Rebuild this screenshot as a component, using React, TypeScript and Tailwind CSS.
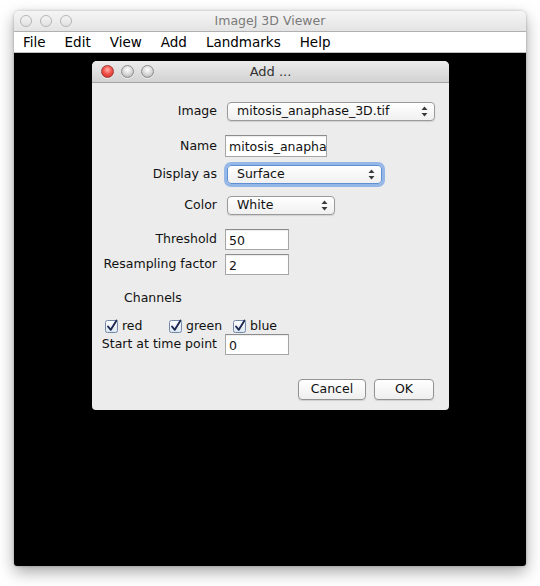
import type { ReactNode } from "react";

const font = "font-['DejaVu_Sans',sans-serif]";

// 맥 스타일 신호등 버튼 (비활성 창)
const InactiveLight = () => (
  <span className="w-[12px] h-[12px] rounded-full border border-[#b5b5b5] bg-gradient-to-b from-[#f4f4f4] to-[#e2e2e2]" />
);

const RedLight = () => (
  <span className="w-[13px] h-[13px] rounded-full border border-[#a23a36] bg-[radial-gradient(circle_at_50%_35%,#ffb3ad_0%,#f2554d_45%,#c5231c_100%)] shadow-[0_1px_0_rgba(255,255,255,0.6)]" />
);

const GrayLight = () => (
  <span className="w-[13px] h-[13px] rounded-full border border-[#8e8e8e] bg-[radial-gradient(circle_at_50%_35%,#ffffff_0%,#d8d8d8_50%,#a9a9a9_100%)] shadow-[0_1px_0_rgba(255,255,255,0.6)]" />
);

const Arrows = () => (
  <svg width="7" height="11" viewBox="0 0 7 11" className="shrink-0">
    <path d="M3.5 0.5 L6.5 4 L0.5 4 Z" fill="#3a3a3a" />
    <path d="M3.5 10.5 L6.5 7 L0.5 7 Z" fill="#3a3a3a" />
  </svg>
);

type PopupProps = { value: string; width: string; focused?: boolean };

const Popup = ({ value, width, focused }: PopupProps) => (
  <div
    className={`${width} h-[19px] ml-[10px] flex items-center justify-between pl-[9px] pr-[6px] rounded-[4px] border bg-gradient-to-b from-white to-[#f0f0f0] ${
      focused
        ? "border-[#5d8fd4] shadow-[0_0_0_3px_rgba(120,166,230,0.75)]"
        : "border-[#9a9a9a] shadow-[0_1px_1px_rgba(0,0,0,0.12)]"
    }`}
  >
    <span className="leading-none">{value}</span>
    <Arrows />
  </div>
);

type FieldProps = { value: string; width: string; height?: string };

const Field = ({ value, width, height = "h-[21px]" }: FieldProps) => (
  <input
    readOnly
    value={value}
    className={`${width} ${height} ml-[8px] pl-[3px] pt-[1px] bg-white border border-[#a6a6a6] border-t-[#8c8c8c] outline-none text-[12.5px] text-[#111] ${font} shadow-[inset_0_1px_1px_rgba(0,0,0,0.08)]`}
  />
);

const Row = ({ label, mt, children }: { label: string; mt: string; children: ReactNode }) => (
  <div className={`flex items-center ${mt}`}>
    <div className="w-[125px] shrink-0 text-right whitespace-nowrap">{label}</div>
    {children}
  </div>
);

const CheckBox = ({ label }: { label: string }) => (
  <div className="w-[64px] flex items-center gap-[4px]">
    <svg width="13" height="14" viewBox="0 0 13 14" className="shrink-0">
      <defs>
        <linearGradient id="cbg" x1="0" y1="0" x2="0" y2="1">
          <stop offset="0" stopColor="#ffffff" />
          <stop offset="1" stopColor="#dde6f1" />
        </linearGradient>
      </defs>
      <rect x="0.5" y="1.5" width="12" height="12" rx="2" fill="url(#cbg)" stroke="#6f88aa" />
      <path d="M3 7.5 L5.8 10.8 L11.5 1.5" fill="none" stroke="#1d2b52" strokeWidth="1.9" strokeLinecap="round" strokeLinejoin="round" />
    </svg>
    <span>{label}</span>
  </div>
);

const Button = ({ label, width }: { label: string; width: string }) => (
  <div
    className={`${width} h-[21px] flex items-center justify-center rounded-[4px] border border-[#939393] bg-gradient-to-b from-white to-[#efefef] shadow-[0_1px_1px_rgba(0,0,0,0.12)]`}
  >
    {label}
  </div>
);

const AddDialog = () => (
  <div
    className={`absolute left-[78px] top-[8px] w-[357px] h-[349px] flex flex-col bg-[#ececec] rounded-t-[5px] rounded-b-[4px] text-[12.5px] text-[#111] ${font}`}
  >
    {/* 다이얼로그 타이틀바 */}
    <div className="relative h-[22px] shrink-0 flex items-center pl-[9px] gap-[7px] rounded-t-[5px] bg-gradient-to-b from-[#ececec] to-[#d2d2d2] border-b border-[#a3a3a3]">
      <RedLight />
      <GrayLight />
      <GrayLight />
      <span className="absolute inset-0 flex items-center justify-center text-[13px] text-[#333]">
        Add ...
      </span>
    </div>

    <Row label="Image" mt="mt-[19px]">
      <Popup value="mitosis_anaphase_3D.tif" width="w-[208px]" />
    </Row>
    <Row label="Name" mt="mt-[14px]">
      <Field value="mitosis_anaphase_3D" width="w-[102px]" height="h-[22px]" />
    </Row>
    <Row label="Display as" mt="mt-[8px]">
      <Popup value="Surface" width="w-[155px]" focused />
    </Row>
    <Row label="Color" mt="mt-[12px]">
      <Popup value="White" width="w-[108px]" />
    </Row>
    <Row label="Threshold" mt="mt-[14px]">
      <Field value="50" width="w-[64px]" />
    </Row>
    <Row label="Resampling factor" mt="mt-[4px]">
      <Field value="2" width="w-[64px]" />
    </Row>

    <div className="mt-[15px] h-[16px] pl-[32px] flex items-center">Channels</div>

    <div className="mt-[12px] h-[16px] pl-[13px] flex items-center">
      <CheckBox label="red" />
      <CheckBox label="green" />
      <CheckBox label="blue" />
    </div>

    <Row label="Start at time point" mt="mt-0">
      <Field value="0" width="w-[64px]" />
    </Row>

    <div className="mt-[24px] flex justify-end gap-[8px] pr-[15px]">
      <Button label="Cancel" width="w-[68px]" />
      <Button label="OK" width="w-[60px]" />
    </div>
  </div>
);

export default function App() {
  const menus = ["File", "Edit", "View", "Add", "Landmarks", "Help"];

  return (
    <div className="w-[540px] h-[586px] bg-white pt-[11px] pl-[14px]">
      <div className="w-[512px] h-[555px] flex flex-col rounded-t-[5px] rounded-b-[3px] shadow-[0_6px_16px_rgba(0,0,0,0.35),0_0_3px_rgba(0,0,0,0.25)]">
        {/* 창 타이틀바 */}
        <div className={`relative h-[21px] shrink-0 flex items-center pl-[6px] gap-[8px] rounded-t-[5px] bg-gradient-to-b from-[#f5f5f5] to-[#e4e4e4] border-b border-[#b0b0b0] ${font}`}>
          <InactiveLight />
          <InactiveLight />
          <InactiveLight />
          <span className="absolute inset-0 flex items-center justify-center text-[12.5px] text-[#7a7a7a]">
            ImageJ 3D Viewer
          </span>
        </div>

        {/* 메뉴바 */}
        <div className={`h-[21px] shrink-0 flex items-center gap-[19px] pl-[9px] bg-white border-b border-[#bdbdbd] text-[13.5px] text-black ${font}`}>
          {menus.map((m) => (
            <span key={m}>{m}</span>
          ))}
        </div>

        {/* 3D 캔버스 */}
        <div className="relative flex-1 bg-black rounded-b-[3px]">
          <AddDialog />
        </div>
      </div>
    </div>
  );
}
